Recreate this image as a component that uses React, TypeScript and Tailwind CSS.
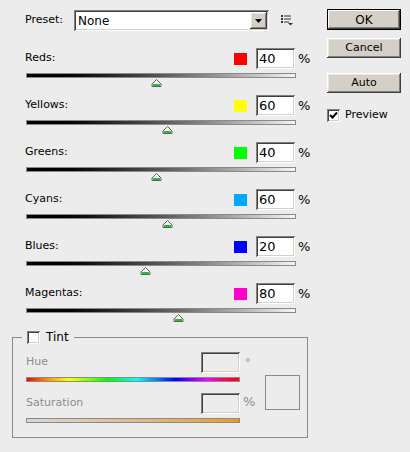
import React from "react";

const FONT = { fontFamily: '"DejaVu Sans", Verdana, sans-serif' };

const rows = [
  { name: "Reds:", color: "bg-[#ff0000]", value: 40 },
  { name: "Yellows:", color: "bg-[#ffff00]", value: 60 },
  { name: "Greens:", color: "bg-[#00ff00]", value: 40 },
  { name: "Cyans:", color: "bg-[#00a8ff]", value: 60 },
  { name: "Blues:", color: "bg-[#0000ff]", value: 20 },
  { name: "Magentas:", color: "bg-[#ff00c8]", value: 80 },
];

const sunken =
  "shadow-[inset_1px_1px_#808080,inset_-1px_-1px_#ffffff,inset_2px_2px_#404040,inset_-2px_-2px_#d4d0c8]";
const raised =
  "shadow-[inset_-1px_-1px_#404040,inset_1px_1px_#ffffff,inset_-2px_-2px_#808080,inset_2px_2px_#e8e6e0]";

function Thumb({ left }: { left: number }) {
  return (
    <svg
      className="absolute top-[5px]"
      style={{ left }}
      width="11"
      height="8"
      viewBox="0 0 11 8"
    >
      <path d="M5.5 0.5 L10 5 L10 7.5 L1 7.5 L1 5 Z" fill="#f2fbf2" stroke="#4d6b4d" strokeWidth="1" />
      <rect x="2" y="5" width="7" height="2" fill="#33b24a" />
    </svg>
  );
}

function SliderRow({ name, color, value }: { name: string; color: string; value: number }) {
  const left = ((value + 200) / 500) * 270 - 5.5;
  return (
    <div className="h-[47px]">
      <div className="flex items-center h-[21px]">
        <span className="w-[209px] text-[11px] text-black">{name}</span>
        <div className={`w-[13px] h-[12px] ${color}`} />
        <div className={`ml-[9px] w-[39px] h-[21px] bg-white ${sunken} flex items-center pl-[3px] text-[13px] text-black`}>
          {value}
        </div>
        <span className="ml-[3px] text-[13px] text-black">%</span>
      </div>
      <div className="relative mt-[4px] ml-px w-[270px] h-[5px] border border-[#8a8a8a] bg-gradient-to-r from-[#000000] from-[5%] to-[#f5f5f5]">
        <Thumb left={left} />
      </div>
    </div>
  );
}

function MenuIcon() {
  return (
    <svg width="12" height="11" viewBox="0 0 12 11" className="ml-[12px]">
      <rect x="0" y="0" width="2" height="2" fill="#333" />
      <rect x="3" y="0.5" width="7" height="1" fill="#333" />
      <rect x="0" y="3" width="2" height="2" fill="#333" />
      <rect x="3" y="3.5" width="7" height="1" fill="#333" />
      <rect x="0" y="6" width="2" height="2" fill="#333" />
      <rect x="3" y="6.5" width="5" height="1" fill="#333" />
      <path d="M7 8 L12 8 L9.5 10.5 Z" fill="#333" />
    </svg>
  );
}

export default function App() {
  return (
    <div className="w-[410px] h-[452px] bg-[#ececec] flex text-black overflow-hidden" style={FONT}>
      <div className="w-[316px] pl-[25px] pt-[10px]">
        <div className="flex items-center h-[21px]">
          <span className="w-[49px] text-[11px]">Preset:</span>
          <div className={`w-[195px] h-[21px] bg-white ${sunken} flex items-center pl-[4px] pr-[2px]`}>
            <span className="flex-1 text-[12px]">None</span>
            <div className={`w-[17px] h-[17px] bg-[#d4d0c8] ${raised} flex items-center justify-center`}>
              <svg width="7" height="4" viewBox="0 0 7 4">
                <path d="M0 0 L7 0 L3.5 4 Z" fill="#000" />
              </svg>
            </div>
          </div>
          <MenuIcon />
        </div>
        <div className="mt-[17px]">
          {rows.map((r) => (
            <SliderRow key={r.name} {...r} />
          ))}
        </div>
        <fieldset className="-ml-[13px] mt-px w-[296px] border border-[#8a8a8a] pl-[9px] pb-[14px]">
          <legend className="px-[5px] h-[13px] flex items-center">
            <div className={`w-[13px] h-[13px] bg-white ${sunken}`} />
            <span className="ml-[6px] text-[12px] leading-[13px]">Tint</span>
          </legend>
          <div className="pl-[4px] flex">
            <div className="w-[214px]">
              <div className="mt-[8px] flex items-center h-[21px]">
                <span className="flex-1 text-[11px] text-[#8c8c8c]">Hue</span>
                <div className={`w-[39px] h-[21px] ${sunken}`} />
              </div>
              <div className="mt-[4px] w-[214px] h-[5px] border border-[#8a8a8a] bg-[linear-gradient(to_right,#ff0000_0%,#ff9900_10%,#ffff00_20%,#00ff00_38%,#00ffff_52%,#0000ff_70%,#ff00ff_85%,#ff0099_90%,#ff0000_100%)]" />
              <div className="mt-[11px] flex items-center h-[21px]">
                <span className="flex-1 text-[11px] text-[#8c8c8c]">Saturation</span>
                <div className={`w-[39px] h-[21px] ${sunken}`} />
              </div>
              <div className="mt-[4px] w-[214px] h-[5px] border border-[#8a8a8a] bg-gradient-to-r from-[#d8d8d8] to-[#e89c10]" />
            </div>
            <div className="w-[25px] relative">
              <span className="absolute left-[5px] top-[11px] text-[11px] text-[#8c8c8c]">°</span>
              <span className="absolute left-[3px] top-[48px] text-[13px] text-[#8c8c8c]">%</span>
            </div>
            <div className="mt-[31px] w-[35px] h-[35px] border border-[#8a8a8a]" />
          </div>
        </fieldset>
      </div>
      <div className="ml-[11px] pt-[9px] flex flex-col">
        <div className="w-[74px] h-[21px] border border-black bg-[#d4d0c8] shadow-[inset_-1px_-1px_#404040,inset_1px_1px_#ffffff,inset_-2px_-2px_#808080] flex items-center justify-center text-[12px]">
          OK
        </div>
        <div className={`mt-[8px] w-[74px] h-[20px] bg-[#d4d0c8] ${raised} flex items-center justify-center text-[11px]`}>
          Cancel
        </div>
        <div className={`mt-[15px] w-[74px] h-[20px] bg-[#d4d0c8] ${raised} flex items-center justify-center text-[11px]`}>
          Auto
        </div>
        <div className="mt-[14px] flex items-center">
          <div className={`w-[13px] h-[13px] bg-white ${sunken} flex items-center justify-center`}>
            <svg width="9" height="9" viewBox="0 0 9 9">
              <path d="M1 4 L3.5 6.5 L8 1.5" stroke="#000" strokeWidth="2" fill="none" />
            </svg>
          </div>
          <span className="ml-[5px] text-[11px]">Preview</span>
        </div>
      </div>
    </div>
  );
}
